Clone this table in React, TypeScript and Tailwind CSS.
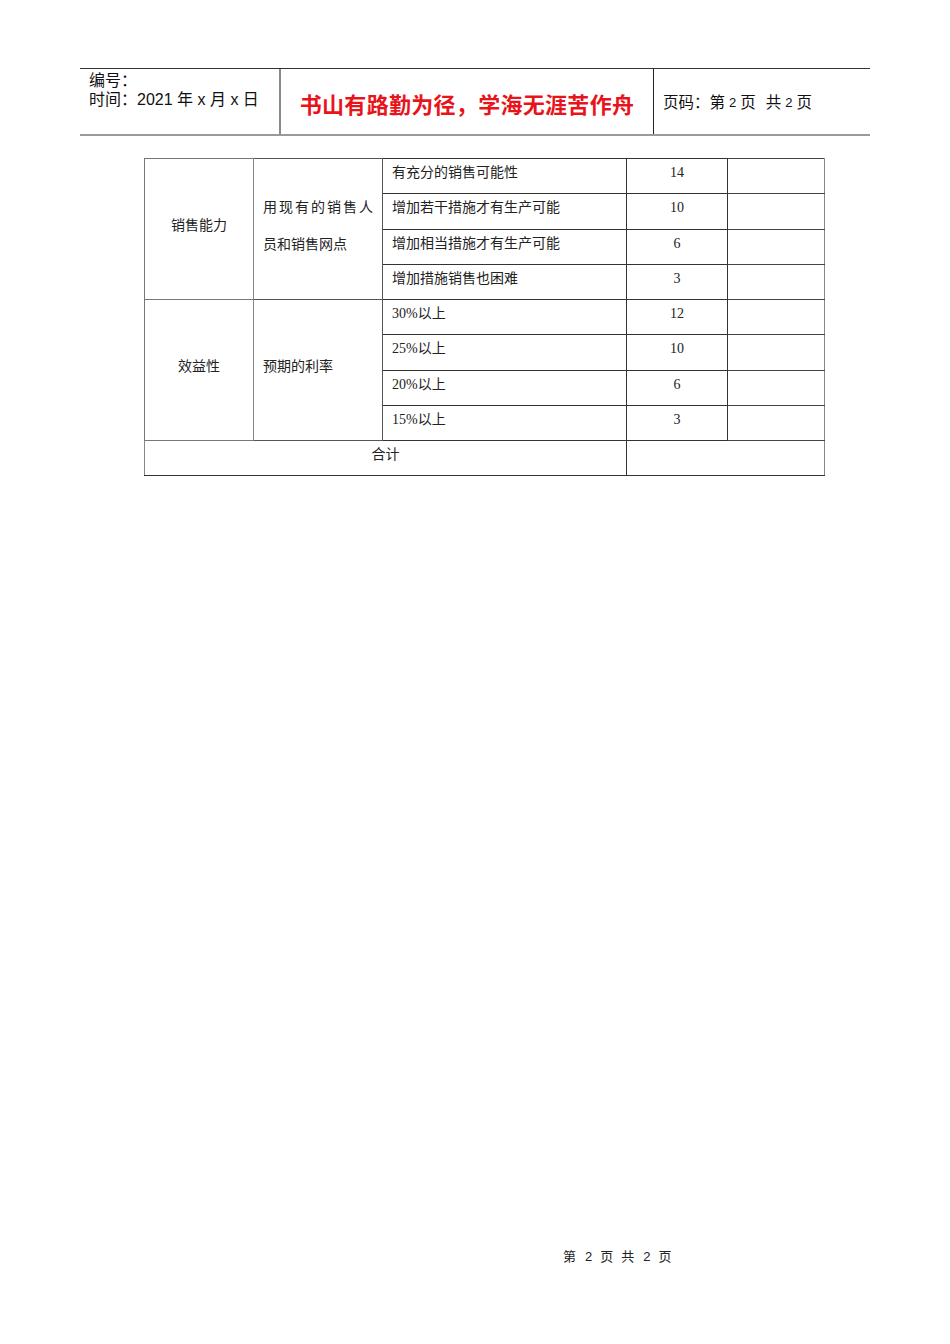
import React from "react";

const cjk = { fontFamily: '"Liberation Serif", "Noto Sans CJK SC", serif' };
const sans = { fontFamily: '"Liberation Sans", "Noto Sans CJK SC", sans-serif' };

const rows1 = [
  ["有充分的销售可能性", "14"],
  ["增加若干措施才有生产可能", "10"],
  ["增加相当措施才有生产可能", "6"],
  ["增加措施销售也困难", "3"],
];
const rows2 = [
  ["30%以上", "12"],
  ["25%以上", "10"],
  ["20%以上", "6"],
  ["15%以上", "3"],
];

export default function App() {
  const cell = "border border-[#333] p-0 align-top";
  return (
    <div className="relative min-h-[1344px] w-[950px] bg-white pt-[68px] text-[#222]" style={sans}>
      {/* header */}
      <div className="ml-[80px] flex h-[68px] w-[790px] border-t border-[#333] border-b-2 border-b-[#9a9a9a]">
        <div className="w-[201px] border-r-2 border-r-[#8a8a8a] pl-[9px] pt-[2px] text-[16px] leading-[19px] text-[#111]">
          <div>编号：</div>
          <div>时间：2021 年 x 月 x 日</div>
        </div>
        <div className="flex w-[373px] items-center justify-center border-r border-r-[#222] pt-[3px]">
          <span className="text-[22px] font-bold tracking-[0.3px] text-[#e8141c]" style={{ fontFamily: '"Noto Sans CJK SC", sans-serif' }}>
            书山有路勤为径，学海无涯苦作舟
          </span>
        </div>
        <div className="flex flex-1 items-center pl-[9px] pt-[3px] text-[15.5px] text-[#111]">
          <span>页码：第</span>
          <span className="mx-[4px] text-[13px]">2</span>
          <span>页</span>
          <span className="ml-[10px]">共</span>
          <span className="mx-[4px] text-[13px]">2</span>
          <span>页</span>
        </div>
      </div>

      {/* table */}
      <table className="ml-[144px] mt-[22px] border-collapse text-[14px] text-[#222]" style={cjk}>
        <colgroup>
          <col className="w-[109px]" />
          <col className="w-[129px]" />
          <col className="w-[244px]" />
          <col className="w-[101px]" />
          <col className="w-[97px]" />
        </colgroup>
        <tbody>
          {rows1.map((r, i) => (
            <tr key={"a" + i} className="h-[35.25px]">
              {i === 0 && (
                <>
                  <td rowSpan={4} className="border border-[#777] border-r-[#888] p-0 pb-[7px] text-center align-middle">
                    销售能力
                  </td>
                  <td rowSpan={4} className="border border-[#555] border-l-[#888] p-0 pb-[7px] pl-[9px] align-middle leading-[37px]">
                    <div className="tracking-[2px]">用现有的销售人</div>
                    <div>员和销售网点</div>
                  </td>
                </>
              )}
              <td className={cell + " pl-[9px] pt-[4px] leading-[20px]"}>{r[0]}</td>
              <td className={cell + " pt-[4px] text-center leading-[20px]"}>{r[1]}</td>
              <td className="border border-[#444] border-l-[#888] border-r-[#888] p-0"></td>
            </tr>
          ))}
          {rows2.map((r, i) => (
            <tr key={"b" + i} className="h-[35.25px]">
              {i === 0 && (
                <>
                  <td rowSpan={4} className="border border-[#777] border-r-[#888] p-0 pb-[7px] text-center align-middle">
                    效益性
                  </td>
                  <td rowSpan={4} className="border border-[#555] border-l-[#888] p-0 pb-[7px] pl-[9px] align-middle">
                    预期的利率
                  </td>
                </>
              )}
              <td className={cell + " pl-[9px] pt-[4px] leading-[20px]"}>{r[0]}</td>
              <td className={cell + " pt-[4px] text-center leading-[20px]"}>{r[1]}</td>
              <td className="border border-[#444] border-l-[#888] border-r-[#888] p-0"></td>
            </tr>
          ))}
          <tr className="h-[35.25px]">
            <td colSpan={3} className="border border-[#333] border-l-[#888] p-0 pt-[4px] text-center align-top leading-[20px]">
              合计
            </td>
            <td colSpan={2} className="border border-[#333] border-r-[#888] p-0"></td>
          </tr>
        </tbody>
      </table>

      {/* footer */}
      <div className="ml-[563px] mt-[773px] flex items-center text-[13px] leading-[16px] text-[#222]" style={sans}>
        <span>第</span>
        <span className="ml-[9px] mr-[8px]">2</span>
        <span>页</span>
        <span className="ml-[8px]">共</span>
        <span className="ml-[9px] mr-[8px]">2</span>
        <span>页</span>
      </div>
    </div>
  );
}
